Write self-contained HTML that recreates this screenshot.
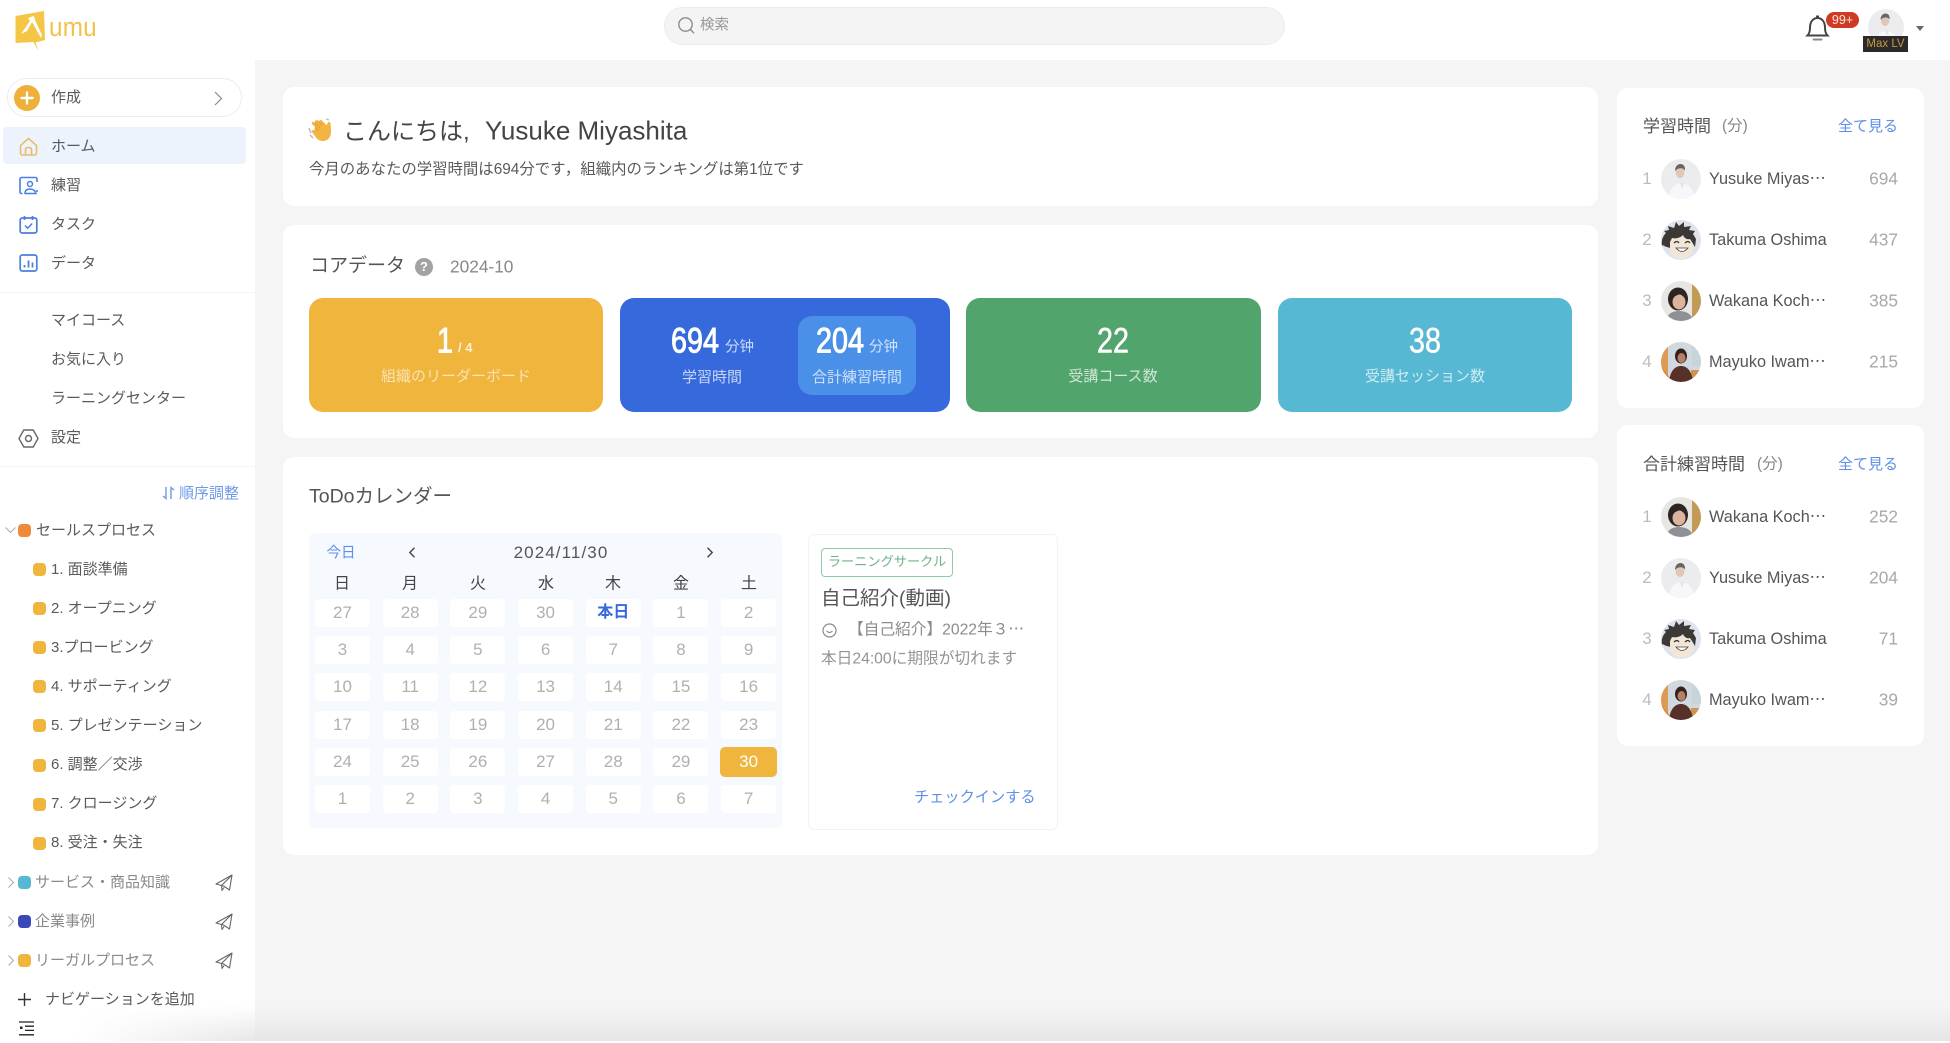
<!DOCTYPE html>
<html lang="ja">
<head>
<meta charset="utf-8">
<title>UMU</title>
<style>
*{box-sizing:border-box;margin:0;padding:0}
html,body{width:1950px;height:1043px;overflow:hidden;background:#f5f5f5}
body{font-family:"Liberation Sans","Noto Sans CJK JP",sans-serif;color:#555;position:relative}
#root{position:absolute;left:0;top:0;width:1950px;height:1043px;overflow:hidden;filter:blur(.35px);background:#f5f5f5}
.a{position:absolute}
.t{position:absolute;white-space:nowrap;transform:translateY(calc(-50% + 1px));line-height:1.2}
.c{transform:translate(-50%,calc(-50% + 1px))}
.card{position:absolute;background:#fff;border-radius:11px}
.stat{position:absolute;top:298px;height:114px;border-radius:14px}
.num{position:absolute;white-space:nowrap;color:#fff;font-size:35px;line-height:1;font-weight:400;transform:translate(-50%,calc(-50% + 1px)) scaleX(.82);-webkit-text-stroke:.5px #fff}
.bd{-webkit-text-stroke:1px #fff}
.lb{position:absolute;white-space:nowrap;color:rgba(255,255,255,.72);font-size:15px;line-height:1.2;transform:translate(-50%,calc(-50% + 1px))}
.un{position:absolute;white-space:nowrap;color:rgba(255,255,255,.75);font-size:14.5px;line-height:1.2;transform:translateY(calc(-50% + 1px));font-family:"Liberation Sans","Noto Sans CJK SC",sans-serif}
.nav{font-size:15px;color:#5a5a5a}
.dot{position:absolute;width:13px;height:13px;border-radius:4px}
.cal{position:absolute;left:315px;top:599px;display:grid;grid-template-columns:repeat(7,55px);column-gap:12.7px;grid-auto-rows:28px;row-gap:9.2px}
.cal div{background:#fff;border-radius:4px;color:#b0b0b0;font-size:17px;line-height:28.5px;text-align:center}
.cal .td{color:#3569dc;font-weight:700;font-size:16px}
.cal .sel{background:#efb53c;color:#fff;outline:1px solid #efb53c}
.wd{font-size:16px;color:#444;transform:translate(-50%,calc(-50% + 1px))}
.name{font-size:16.3px;color:#555}
.val{position:absolute;font-size:17.3px;color:#a8a8a8;transform:translateY(-50%);right:52px;white-space:nowrap;line-height:1.2}
.rk{position:absolute;font-size:17px;color:#bcbcbc;transform:translate(-50%,-50%);left:1647px;line-height:1.2}
.av{position:absolute;left:1661px;width:40px;height:40px}
.unit{font-size:15.5px;color:#888}
svg{display:block}
</style>
</head>
<body>
<div id="root">
<svg width="0" height="0" style="position:absolute">
<defs>
<clipPath id="cc"><circle cx="20" cy="20" r="20"/></clipPath>
<symbol id="a1" viewBox="0 0 40 40"><g clip-path="url(#cc)"><rect width="40" height="40" fill="#ececef"/><path d="M8 40c0-11 6-15 12-16 7 1 13 5 13 16z" fill="#f6f7fb"/><path d="M19 24l2 6 2-6z" fill="#dfe3ec"/><ellipse cx="19" cy="13" rx="4.500" ry="6" fill="#dfc8ba"/><path d="M14 12c0-5 3-7 5.500-7s5 2 4.500 6.500c-2-3-7-3-10 .5z" fill="#6a6360"/></g></symbol>
<symbol id="a2" viewBox="0 0 40 40"><g clip-path="url(#cc)"><rect width="40" height="40" fill="#dfe3ee"/><path d="M9 30c2 7 7 9 11 9s10-2 12-9l-2-12H10z" fill="#f3e6d4"/><path d="M1 26C0 20 2 16 5 13L3 11l5-1-1-4 6 2 2-6 3 4 5-4v5l7-1-2 4 6 1-2 3 3 5-1 8-3-5-2-3c-3 1-6-1-7-4-3 3-7 4-11 3l-2 4v6c-2-1-5-1-7-3z" fill="#3b3835"/><path d="M13 23q3-3 5 0M24 23q3-3 5 0" stroke="#333" stroke-width="1.300" fill="none"/><path d="M15 28q6 7 12 0z" fill="#fff" stroke="#444" stroke-width=".8"/></g></symbol>
<symbol id="a3" viewBox="0 0 40 40"><g clip-path="url(#cc)"><rect width="40" height="40" fill="#e8e6e3"/><rect x="31" width="9" height="40" fill="#c19a55"/><path d="M5 40c1-7 6-10 13-10s13 3 14 10z" fill="#8d9195"/><ellipse cx="17" cy="18" rx="10" ry="11.500" fill="#2c2522"/><ellipse cx="18" cy="21" rx="6.500" ry="7.500" fill="#dcb39c"/><path d="M10 17c3-1 7-3 9-5 2 3 4 4 6 5l-1-7H11z" fill="#2c2522"/></g></symbol>
<symbol id="a4" viewBox="0 0 40 40"><g clip-path="url(#cc)"><rect width="40" height="40" fill="#cfd9de"/><path d="M0 0h7v40H0z" fill="#dd9a55"/><path d="M0 24l12 16H0z" fill="#d9893a"/><path d="M31 0h9v24h-9z" fill="#c7d5da"/><path d="M30 28h10v12H30z" fill="#d29253"/><path d="M8 40c1-11 6-16 12-16s11 5 12 16z" fill="#57302a"/><ellipse cx="20" cy="14" rx="6" ry="7.500" fill="#33221c"/><ellipse cx="20.500" cy="16" rx="4" ry="5" fill="#b77f66"/></g></symbol>
<symbol id="send" viewBox="0 0 18 18"><path d="M17 1L1 10l5.500 1.500L17 1zM17 1l-2.500 15-6-4L6.500 11.500 7 16.500l2-3" fill="none" stroke="#666" stroke-width="1.100" stroke-linejoin="round"/></symbol>
</defs>
</svg>

<!-- header -->
<div class="a" style="left:0;top:0;width:1950px;height:60px;background:#fff"></div>
<svg class="a" style="left:13px;top:8px" width="40" height="45" viewBox="0 0 40 45">
<path d="M2.500 8L31 3l1 29-9.500 2.500 3 8.500-5-9-18 1z" fill="#f5c545"/>
<path d="M8 26l9-13-2-3 6-2 1 4 7 15-1 3-9-16-5 9z" fill="#fff"/>
</svg>
<div class="t" style="left:49px;top:27px;font-size:27px;color:#f1c24c;transform:translateY(-50%) scaleX(.9);transform-origin:left center;letter-spacing:.2px">umu</div>
<div class="a" style="left:664px;top:7px;width:621px;height:38px;border-radius:19px;background:#f4f4f4;border:1px solid #ebebeb"></div>
<svg class="a" style="left:677px;top:16px" width="19" height="19" viewBox="0 0 19 19"><circle cx="8.500" cy="8.500" r="6.700" fill="none" stroke="#8c8c8c" stroke-width="1.400"/><path d="M13.500 13.500l3.500 3.800" stroke="#8c8c8c" stroke-width="1.400"/></svg>
<div class="t" style="left:700px;top:25px;font-size:14.500px;color:#9a9a9a">検索</div>
<svg class="a" style="left:1805px;top:14px" width="25" height="28" viewBox="0 0 25 28"><path d="M2.500 21.500c2-2 2.500-4 2.500-8C5 8 8 4 12.500 4S20 8 20 13.500c0 4 .5 6 2.500 8z" fill="none" stroke="#444" stroke-width="2"/><path d="M11 2.500h3" stroke="#444" stroke-width="2"/><path d="M8.500 25.500h8" stroke="#888" stroke-width="2" stroke-linecap="round"/></svg>
<div class="a" style="left:1826px;top:12px;width:33px;height:16px;border-radius:8px;background:#cf3b22;color:#f8e8e0;font-size:12.500px;line-height:16px;text-align:center">99+</div>
<svg class="a" style="left:1868px;top:9px" width="36" height="36"><use href="#a1" width="36" height="36"/></svg>
<div class="a" style="left:1863px;top:36px;width:45px;height:16px;background:#2b2a28;color:#c39a45;font-size:11.500px;line-height:16px;text-align:center">Max LV</div>
<svg class="a" style="left:1916px;top:26px" width="8" height="6"><path d="M0 0h8L4 5z" fill="#666"/></svg>

<!-- sidebar -->
<div class="a" style="left:0;top:60px;width:255px;height:983px;background:#fff"></div>
<div class="a" style="left:7px;top:78px;width:235px;height:39px;border-radius:20px;border:1px solid #ececec;background:#fff"></div>
<svg class="a" style="left:14px;top:85px" width="26" height="26" viewBox="0 0 26 26"><circle cx="13" cy="13" r="13" fill="#efb03a"/><path d="M13 7.500v11M7.500 13h11" stroke="#fff" stroke-width="2.400" stroke-linecap="round"/></svg>
<div class="t nav" style="left:51px;top:97px">作成</div>
<svg class="a" style="left:214px;top:91px" width="9" height="15" viewBox="0 0 9 15"><path d="M1 1l6.500 6.500L1 14" fill="none" stroke="#888" stroke-width="1.200"/></svg>
<div class="a" style="left:3px;top:127px;width:243px;height:37px;border-radius:4px;background:#edf3fc"></div>
<svg class="a" style="left:19px;top:137px" width="19" height="19" viewBox="0 0 19 19"><path d="M1.500 8.500L9.500 1.500l8 7v7.500a2 2 0 0 1-2 2h-12a2 2 0 0 1-2-2z" fill="none" stroke="#e8bd6c" stroke-width="1.600" stroke-linejoin="round"/><path d="M6.500 17.500v-5a2 2 0 0 1 2-2h2a2 2 0 0 1 2 2v5" fill="none" stroke="#e8bd6c" stroke-width="1.600"/></svg>
<div class="t nav" style="left:51px;top:146px">ホーム</div>
<svg class="a" style="left:19px;top:176px" width="19" height="19" viewBox="0 0 19 19"><path d="M3.500 17.500H2.500a1.500 1.500 0 0 1-1.500-1.500V3a1.500 1.500 0 0 1 1.500-1.500h14A1.500 1.500 0 0 1 18 3v3M18 14v2" fill="none" stroke="#4a7fe0" stroke-width="1.600"/><circle cx="11" cy="8" r="2.500" fill="none" stroke="#4a7fe0" stroke-width="1.500"/><path d="M6 17.500c0-3.500 2-4.500 5-4.500s5 1 6 4.500z" fill="none" stroke="#4a7fe0" stroke-width="1.500"/></svg>
<div class="t nav" style="left:51px;top:185px">練習</div>
<svg class="a" style="left:19px;top:215px" width="19" height="19" viewBox="0 0 19 19"><rect x="1.200" y="3" width="16.600" height="15" rx="2" fill="none" stroke="#4a7fe0" stroke-width="1.700"/><path d="M5.500 1v4M13.500 1v4" stroke="#4a7fe0" stroke-width="1.700"/><path d="M6 10.500l2.700 2.700 4.500-4.700" fill="none" stroke="#4a7fe0" stroke-width="1.500"/></svg>
<div class="t nav" style="left:51px;top:224px">タスク</div>
<svg class="a" style="left:19px;top:254px" width="19" height="18" viewBox="0 0 19 18"><rect x="1.200" y="1" width="16.600" height="16" rx="2" fill="none" stroke="#4a7fe0" stroke-width="1.700"/><path d="M5.500 13.500v-2.500M9.500 13.500V6.500M13.500 13.500V8.500" stroke="#4a7fe0" stroke-width="1.800"/></svg>
<div class="t nav" style="left:51px;top:263px">データ</div>
<div class="a" style="left:0;top:292px;width:255px;height:1px;background:#f4f4f4"></div>
<div class="t nav" style="left:51px;top:320px">マイコース</div>
<div class="t nav" style="left:51px;top:359px">お気に入り</div>
<div class="t nav" style="left:51px;top:398px">ラーニングセンター</div>
<svg class="a" style="left:18px;top:429px" width="21" height="19" viewBox="0 0 21 19"><path d="M5.800 1h9.400l4.800 8.500L15.200 18H5.800L1 9.500z" fill="none" stroke="#666" stroke-width="1.400" stroke-linejoin="round"/><circle cx="10.500" cy="9.500" r="3" fill="none" stroke="#666" stroke-width="1.400"/></svg>
<div class="t nav" style="left:51px;top:437px">設定</div>
<div class="a" style="left:0;top:466px;width:255px;height:1px;background:#f4f4f4"></div>
<svg class="a" style="left:162px;top:486px" width="13" height="14" viewBox="0 0 13 14"><path d="M4 1v11.500L1 10M9 13V1.500L12 4" fill="none" stroke="#6e9ae8" stroke-width="1.400"/></svg>
<div class="t" style="left:179px;top:492.500px;font-size:15px;color:#6e9ae8">順序調整</div>

<svg class="a" style="left:5px;top:527px" width="11" height="7"><path d="M.5.500l5 5 5-5" fill="none" stroke="#aaa" stroke-width="1"/></svg>
<div class="dot" style="left:18px;top:524px;background:#ef8a3a"></div>
<div class="t nav" style="left:36px;top:530px">セールスプロセス</div>

<div class="dot" style="left:33px;top:563px;background:#efb53c"></div><div class="t nav" style="left:51px;top:569px">1. 面談準備</div>
<div class="dot" style="left:33px;top:602px;background:#efb53c"></div><div class="t nav" style="left:51px;top:608px">2. オープニング</div>
<div class="dot" style="left:33px;top:641px;background:#efb53c"></div><div class="t nav" style="left:51px;top:647px">3.プロービング</div>
<div class="dot" style="left:33px;top:680px;background:#efb53c"></div><div class="t nav" style="left:51px;top:686px">4. サポーティング</div>
<div class="dot" style="left:33px;top:719px;background:#efb53c"></div><div class="t nav" style="left:51px;top:725px">5. プレゼンテーション</div>
<div class="dot" style="left:33px;top:759px;background:#efb53c"></div><div class="t nav" style="left:51px;top:764px">6. 調整／交渉</div>
<div class="dot" style="left:33px;top:798px;background:#efb53c"></div><div class="t nav" style="left:51px;top:803px">7. クロージング</div>
<div class="dot" style="left:33px;top:837px;background:#efb53c"></div><div class="t nav" style="left:51px;top:842px">8. 受注・失注</div>

<svg class="a" style="left:8px;top:877px" width="7" height="11"><path d="M.5.500l5 5-5 5" fill="none" stroke="#aaa" stroke-width="1"/></svg>
<div class="dot" style="left:18px;top:876px;background:#56b8d2"></div>
<div class="t nav" style="left:35px;top:882px;color:#8a8a8a">サービス・商品知識</div>
<svg class="a" style="left:215px;top:874px" width="18" height="18"><use href="#send" width="18" height="18"/></svg>

<svg class="a" style="left:8px;top:916px" width="7" height="11"><path d="M.5.500l5 5-5 5" fill="none" stroke="#aaa" stroke-width="1"/></svg>
<div class="dot" style="left:18px;top:915px;background:#3b48b8"></div>
<div class="t nav" style="left:35px;top:921px;color:#8a8a8a">企業事例</div>
<svg class="a" style="left:215px;top:913px" width="18" height="18"><use href="#send" width="18" height="18"/></svg>

<svg class="a" style="left:8px;top:955px" width="7" height="11"><path d="M.5.500l5 5-5 5" fill="none" stroke="#aaa" stroke-width="1"/></svg>
<div class="dot" style="left:18px;top:954px;background:#efb53c"></div>
<div class="t nav" style="left:35px;top:960px;color:#8a8a8a">リーガルプロセス</div>
<svg class="a" style="left:215px;top:952px" width="18" height="18"><use href="#send" width="18" height="18"/></svg>

<svg class="a" style="left:18px;top:993px" width="13" height="13"><path d="M6.500 0v13M0 6.500h13" stroke="#333" stroke-width="1.400"/></svg>
<div class="t nav" style="left:45px;top:999px">ナビゲーションを追加</div>
<svg class="a" style="left:19px;top:1021px" width="15" height="15" viewBox="0 0 15 15"><path d="M0 1h15M6 5.200h9M6 9.400h9M0 13.800h15" stroke="#222" stroke-width="1.300"/><path d="M1 5.500h2.500v2.500H1z" fill="#222"/></svg>

<!-- greeting -->
<div class="card" style="left:283px;top:87px;width:1315px;height:119px"></div>
<svg class="a" style="left:308px;top:117px" width="26" height="26" viewBox="0 0 26 26"><path d="M7 10L4 7c-1-1 1-3 2-2l1 1c-1-2 1-3.500 2.500-2.500L11 5c0-2 2-2.500 3-1.500l5 5c0-2 1-4 3-3.500 1 3 1 7 1 10 0 5-3 9-8 9-3 0-5-1-7-3.500L4 15c-1-1 .5-2.500 2-1.500z" fill="#f2b544"/><path d="M7 6l5 5M9.500 3.500l4.500 5M7 10l4 4" stroke="#d9962b" stroke-width=".7"/><path d="M1 11l2 5M2 18l3 3" stroke="#b9bcc2" stroke-width="1.500"/><path d="M18 2l3 1" stroke="#b9bcc2" stroke-width="1.200"/></svg>
<div class="t" style="left:343px;top:131.500px;font-size:24px;color:#444">こんにちは,</div>
<div class="t" style="left:485px;top:130px;font-size:26px;color:#444">Yusuke Miyashita</div>
<div class="t" style="left:309px;top:168.500px;font-size:15.400px;color:#5a5a5a">今月のあなたの学習時間は694分です，組織内のランキングは第1位です</div>

<!-- core data -->
<div class="card" style="left:283px;top:225px;width:1315px;height:213px"></div>
<div class="t" style="left:310px;top:265.500px;font-size:19px;color:#555">コアデータ</div>
<div class="a" style="left:415px;top:258px;width:18px;height:18px;border-radius:50%;background:#a2a2a2;color:#fff;font-size:13px;font-weight:700;line-height:18px;text-align:center">?</div>
<div class="t" style="left:450px;top:266px;font-size:17.300px;color:#888">2024-10</div>

<div class="stat" style="left:309px;width:294px;background:#efb53c"></div>
<div class="num bd" style="left:445px;top:340px">1</div>
<div class="un" style="left:458px;top:347px;font-size:13px;font-weight:700;color:rgba(255,255,255,.8)">/ 4</div>
<div class="lb" style="left:456px;top:376px;color:rgba(255,255,255,.62)">組織のリーダーボード</div>

<div class="stat" style="left:620px;width:330px;background:#3569dc"></div>
<div class="a" style="left:798px;top:316px;width:118px;height:79px;border-radius:14px;background:#4a90e8"></div>
<div class="num bd" style="left:695px;top:340px">694</div>
<div class="un" style="left:725px;top:347px">分钟</div>
<div class="lb" style="left:712px;top:377px">学習時間</div>
<div class="num bd" style="left:840px;top:340px">204</div>
<div class="un" style="left:869px;top:347px">分钟</div>
<div class="lb" style="left:857px;top:377px">合計練習時間</div>

<div class="stat" style="left:966px;width:295px;background:#52a46d"></div>
<div class="num" style="left:1113px;top:340px">22</div>
<div class="lb" style="left:1113px;top:376px">受講コース数</div>

<div class="stat" style="left:1278px;width:294px;background:#56b8d2"></div>
<div class="num" style="left:1425px;top:340px">38</div>
<div class="lb" style="left:1425px;top:376px">受講セッション数</div>

<!-- todo -->
<div class="card" style="left:283px;top:457px;width:1315px;height:398px"></div>
<div class="t" style="left:309px;top:496px;font-size:19.500px;color:#555">ToDoカレンダー</div>
<div class="a" style="left:309px;top:533px;width:473px;height:295px;border-radius:6px;background:#f6f9fe"></div>
<div class="t c" style="left:341px;top:553px;font-size:14.500px;color:#5f8fe6">今日</div>
<svg class="a" style="left:408px;top:547px" width="8" height="11" viewBox="0 0 8 11"><path d="M6.500.8L1.800 5.500l4.700 4.700" fill="none" stroke="#444" stroke-width="1.400"/></svg>
<div class="t c" style="left:561px;top:552px;font-size:17px;color:#555;letter-spacing:1.100px">2024/11/30</div>
<svg class="a" style="left:706px;top:547px" width="8" height="11" viewBox="0 0 8 11"><path d="M1.500.8l4.700 4.700-4.700 4.700" fill="none" stroke="#444" stroke-width="1.400"/></svg>
<div class="t wd" style="left:342px;top:583px">日</div>
<div class="t wd" style="left:410px;top:583px">月</div>
<div class="t wd" style="left:478px;top:583px">火</div>
<div class="t wd" style="left:546px;top:583px">水</div>
<div class="t wd" style="left:613px;top:583px">木</div>
<div class="t wd" style="left:681px;top:583px">金</div>
<div class="t wd" style="left:749px;top:583px">土</div>
<div class="cal">
<div>27</div><div>28</div><div>29</div><div>30</div><div class="td">本日</div><div>1</div><div>2</div>
<div>3</div><div>4</div><div>5</div><div>6</div><div>7</div><div>8</div><div>9</div>
<div>10</div><div>11</div><div>12</div><div>13</div><div>14</div><div>15</div><div>16</div>
<div>17</div><div>18</div><div>19</div><div>20</div><div>21</div><div>22</div><div>23</div>
<div>24</div><div>25</div><div>26</div><div>27</div><div>28</div><div>29</div><div class="sel">30</div>
<div>1</div><div>2</div><div>3</div><div>4</div><div>5</div><div>6</div><div>7</div>
</div>

<div class="a" style="left:808px;top:534px;width:250px;height:296px;border:1px solid #f3f3f3;border-radius:6px;background:#fff"></div>
<div class="a" style="left:821px;top:548px;width:132px;height:29px;border:1px solid #8fcba4;border-radius:4px;color:#6fb287;font-size:13.200px;line-height:26px;text-align:center">ラーニングサークル</div>
<div class="t" style="left:821px;top:598px;font-size:19.500px;color:#555">自己紹介(動画)</div>
<svg class="a" style="left:822px;top:623px" width="15" height="15" viewBox="0 0 15 15"><circle cx="7.500" cy="7.500" r="6.500" fill="none" stroke="#8a8a8a" stroke-width="1.200"/><path d="M4.500 8q3 3 6 0" fill="none" stroke="#8a8a8a" stroke-width="1.200"/></svg>
<div class="t" style="left:848px;top:630px;font-size:15.700px;color:#8c8c8c">【自己紹介】2022年３⋯</div>
<div class="t" style="left:821px;top:659px;font-size:15.700px;color:#949494">本日24:00に期限が切れます</div>
<div class="t" style="left:914px;top:797px;font-size:15.200px;color:#5f8fe6">チェックインする</div>

<!-- ranking 1 -->
<div class="card" style="left:1617px;top:88px;width:307px;height:320px"></div>
<div class="t" style="left:1643px;top:126px;font-size:17px;color:#555">学習時間</div><div class="t unit" style="left:1722px;top:126px">(分)</div>
<div class="t" style="left:1838px;top:126px;font-size:15px;color:#5f8fe6">全て見る</div>
<div class="rk" style="top:179px">1</div><svg class="av" style="top:159px"><use href="#a1" width="40" height="40"/></svg><div class="t name" style="left:1709px;top:179px">Yusuke Miyas⋯</div><div class="val" style="top:179px">694</div>
<div class="rk" style="top:240px">2</div><svg class="av" style="top:220px"><use href="#a2" width="40" height="40"/></svg><div class="t name" style="left:1709px;top:240px">Takuma Oshima</div><div class="val" style="top:240px">437</div>
<div class="rk" style="top:301px">3</div><svg class="av" style="top:281px"><use href="#a3" width="40" height="40"/></svg><div class="t name" style="left:1709px;top:301px">Wakana Koch⋯</div><div class="val" style="top:301px">385</div>
<div class="rk" style="top:362px">4</div><svg class="av" style="top:342px"><use href="#a4" width="40" height="40"/></svg><div class="t name" style="left:1709px;top:362px">Mayuko Iwam⋯</div><div class="val" style="top:362px">215</div>

<!-- ranking 2 -->
<div class="card" style="left:1617px;top:425px;width:307px;height:321px"></div>
<div class="t" style="left:1643px;top:464px;font-size:17px;color:#555">合計練習時間</div><div class="t unit" style="left:1757px;top:464px">(分)</div>
<div class="t" style="left:1838px;top:464px;font-size:15px;color:#5f8fe6">全て見る</div>
<div class="rk" style="top:517px">1</div><svg class="av" style="top:497px"><use href="#a3" width="40" height="40"/></svg><div class="t name" style="left:1709px;top:517px">Wakana Koch⋯</div><div class="val" style="top:517px">252</div>
<div class="rk" style="top:578px">2</div><svg class="av" style="top:558px"><use href="#a1" width="40" height="40"/></svg><div class="t name" style="left:1709px;top:578px">Yusuke Miyas⋯</div><div class="val" style="top:578px">204</div>
<div class="rk" style="top:639px">3</div><svg class="av" style="top:619px"><use href="#a2" width="40" height="40"/></svg><div class="t name" style="left:1709px;top:639px">Takuma Oshima</div><div class="val" style="top:639px">71</div>
<div class="rk" style="top:700px">4</div><svg class="av" style="top:680px"><use href="#a4" width="40" height="40"/></svg><div class="t name" style="left:1709px;top:700px">Mayuko Iwam⋯</div><div class="val" style="top:700px">39</div>

<!-- bottom fade -->
<div class="a" style="left:255px;top:1005px;width:1695px;height:36px;background:linear-gradient(#f5f5f5,#e6e6e6)"></div>
<div class="a" style="left:0;top:1005px;width:255px;height:36px;background:linear-gradient(100deg,rgba(230,230,230,0) 30%,rgba(228,228,228,.9) 100%);-webkit-mask-image:linear-gradient(transparent,#000)"></div>
<div class="a" style="left:0;top:1041px;width:1950px;height:2px;background:#fff"></div>
</div>
</body>
</html>
